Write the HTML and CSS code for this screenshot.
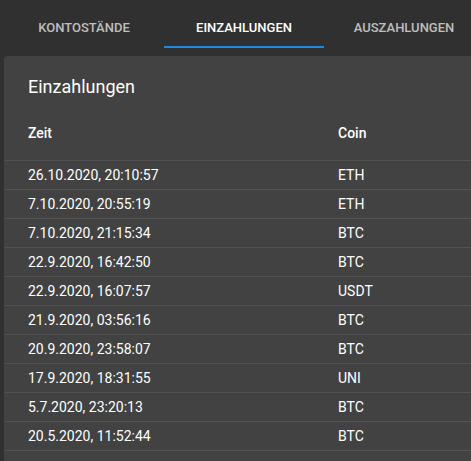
FILE: index.html
```html
<!DOCTYPE html>
<html lang="de">
<head>
<meta charset="utf-8">
<title>Einzahlungen</title>
<link rel="stylesheet" href="styles.css">
</head>
<body>
<nav class="tabs">
  <div class="tab">Kontostände</div>
  <div class="tab active">Einzahlungen</div>
  <div class="tab">Auszahlungen</div>
</nav>
<section class="card">
  <h2 class="title">Einzahlungen</h2>
  <div class="table">
    <div class="row head"><span class="col-time">Zeit</span><span class="col-coin">Coin</span></div>
    <div class="row"><span class="col-time">26.10.2020, 20:10:57</span><span class="col-coin">ETH</span></div>
    <div class="row"><span class="col-time">7.10.2020, 20:55:19</span><span class="col-coin">ETH</span></div>
    <div class="row"><span class="col-time">7.10.2020, 21:15:34</span><span class="col-coin">BTC</span></div>
    <div class="row"><span class="col-time">22.9.2020, 16:42:50</span><span class="col-coin">BTC</span></div>
    <div class="row"><span class="col-time">22.9.2020, 16:07:57</span><span class="col-coin">USDT</span></div>
    <div class="row"><span class="col-time">21.9.2020, 03:56:16</span><span class="col-coin">BTC</span></div>
    <div class="row"><span class="col-time">20.9.2020, 23:58:07</span><span class="col-coin">BTC</span></div>
    <div class="row"><span class="col-time">17.9.2020, 18:31:55</span><span class="col-coin">UNI</span></div>
    <div class="row"><span class="col-time">5.7.2020, 23:20:13</span><span class="col-coin">BTC</span></div>
    <div class="row"><span class="col-time">20.5.2020, 11:52:44</span><span class="col-coin">BTC</span></div>
  </div>
</section>
</body>
</html>
```

FILE: styles.css
```css
html, body {
  margin: 0;
  padding: 0;
  background: #303030;
  overflow: hidden;
  font-family: Roboto, "Liberation Sans", sans-serif;
  color: #fff;
}

.tabs {
  display: flex;
  padding-left: 4px;
  height: 48px;
  width: 700px;
}

.tab {
  position: relative;
  flex: 0 0 160px;
  display: flex;
  align-items: center;
  justify-content: center;
  text-transform: uppercase;
  font-size: 13px;
  font-weight: 500;
  color: rgba(255, 255, 255, 0.7);
  padding-top: 6px;
  box-sizing: border-box;
}

.tab.active {
  color: #fff;
}

.tab.active::after {
  content: "";
  position: absolute;
  left: 0;
  right: 0;
  bottom: 0;
  height: 2px;
  background: #1e88e5;
}

.card {
  margin: 8px 0 0 4px;
  width: 640px;
  background: #424242;
  border-radius: 4px;
  padding-bottom: 20px;
}

.title {
  margin: 0;
  box-sizing: border-box;
  height: 48px;
  padding: 16px 24px 0;
  font-size: 18px;
  font-weight: 400;
  line-height: 30px;
}

.table {
  font-size: 14px;
}

.row {
  display: flex;
  align-items: center;
  box-sizing: border-box;
  height: 29px;
  padding-left: 24px;
  border-bottom: 1px solid #515151;
}

.row.head {
  height: 57px;
  padding-top: 2px;
  font-weight: 500;
}

.col-time {
  flex: 0 0 310px;
}

.col-coin {
  flex: 0 0 120px;
}
```
